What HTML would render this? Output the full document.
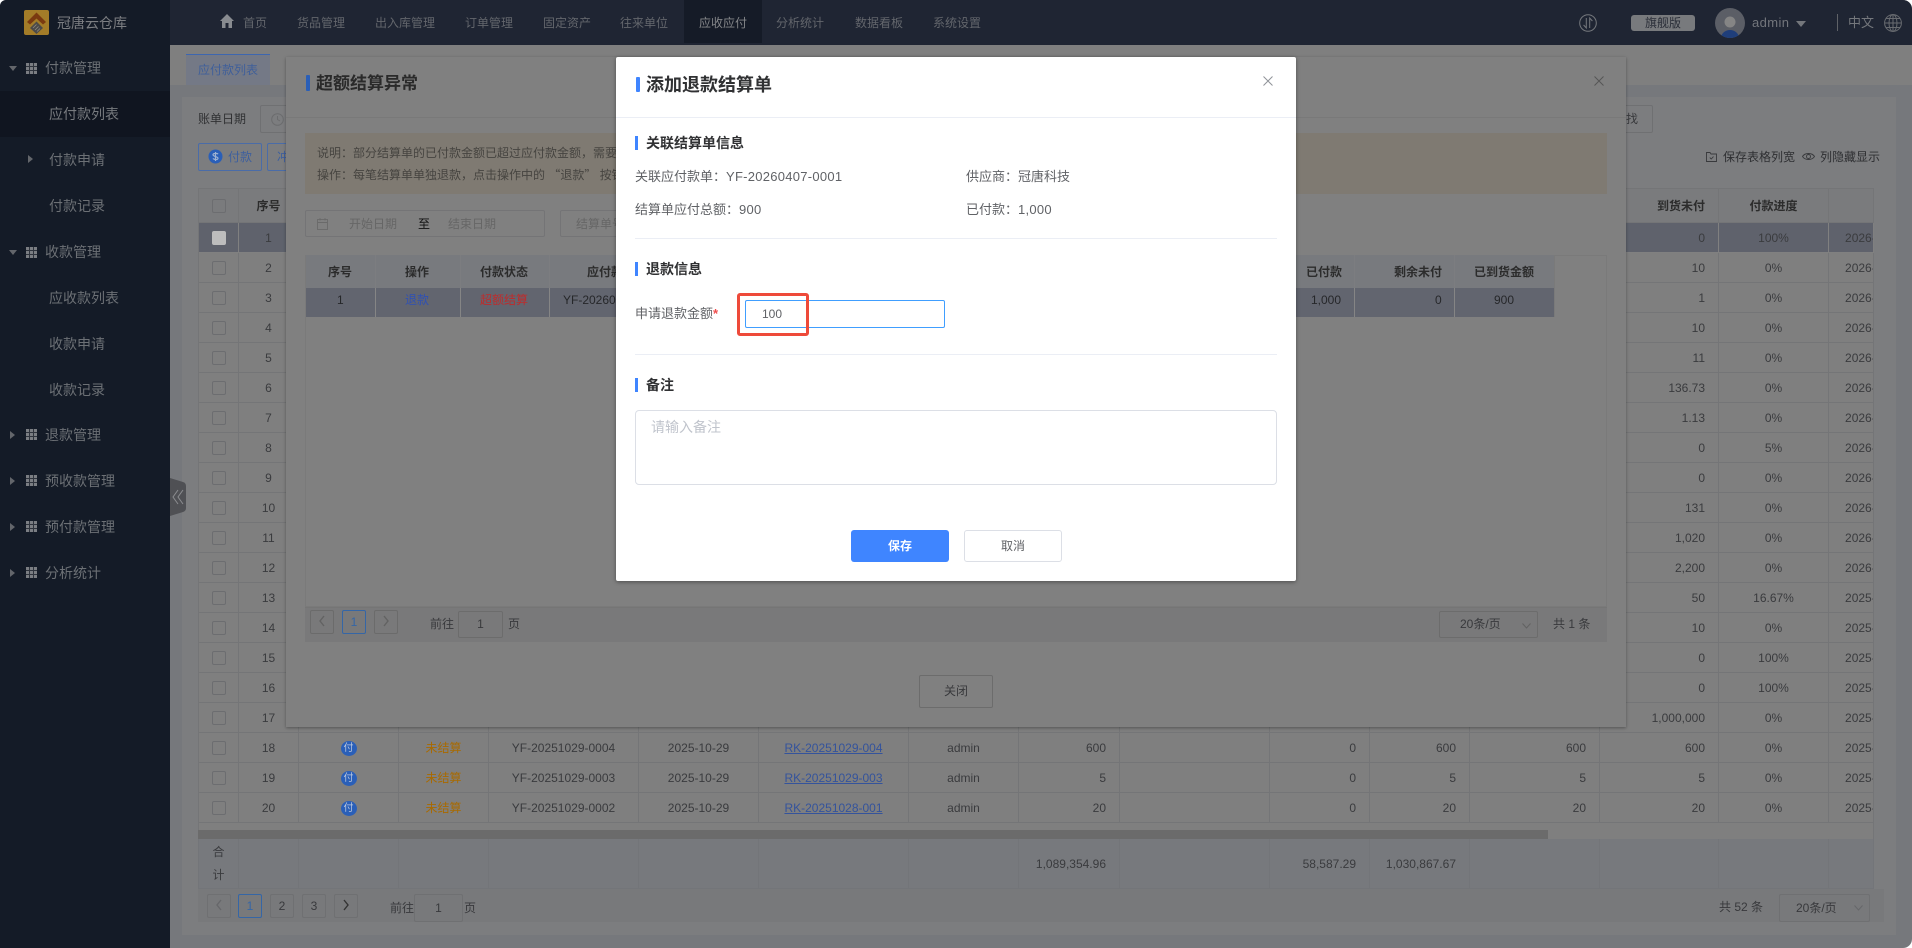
<!DOCTYPE html>
<html lang="zh-CN">
<head>
<meta charset="utf-8">
<title>冠唐云仓库</title>
<style>
*{box-sizing:border-box}
html,body{margin:0;padding:0;background:#fff;width:1912px;height:948px;overflow:hidden}
body{font:12px/20px "Liberation Sans","Noto Sans CJK SC",sans-serif;color:#38393c}
#root{position:absolute;left:0;top:0;width:1912px;height:948px;overflow:hidden;border-radius:6px 9px 9px 0;background:#76787c}
.a{position:absolute;white-space:nowrap}
.b{border:1px solid #6f7072;border-radius:2px}
.side{color:#6c7075;font-size:14px}
.nav{color:#63666c;font-size:12px;top:13px}
.tri-d{position:absolute;width:0;height:0;border-left:4px solid transparent;border-right:4px solid transparent;border-top:5px solid #63666b}
.tri-r{position:absolute;width:0;height:0;border-top:4px solid transparent;border-bottom:4px solid transparent;border-left:5px solid #63666b}
.g{position:absolute;width:11px;height:11px;background:repeating-linear-gradient(90deg,transparent 0 3px,#2f343d 3px 4px),repeating-linear-gradient(0deg,transparent 0 3px,#2f343d 3px 4px),#7b7e83}
table{border-collapse:separate;border-spacing:0;table-layout:fixed;position:absolute}
td,th{padding:0 13px;border-right:1px solid #747577;border-bottom:1px solid #747577;overflow:hidden;white-space:nowrap;font-size:12px;font-weight:400;height:30px;line-height:20px;text-align:center;color:#3a3b3e;background:#7f7f7f}
#ot{left:198px;top:188px;width:1675px;border-left:1px solid #747577;border-top:1px solid #747577}
#ot th{height:34px;background:#7a7b7d;font-weight:700;color:#2c2c2c}
#ot td.r,#ot th.r{text-align:right}
#ot td.d{text-align:left;padding:0 0 0 16px}
#ot td.p0,#ot th.p0{padding:0}
tr.s td{background:#5f626c;border-color:#808080}
.cb{display:inline-block;width:14px;height:14px;border:1px solid #6c6d70;border-radius:2px;vertical-align:middle}
tr.s .cb{background:#bdbdbd;border-color:#bdbdbd}
.pay{display:inline-block;width:16px;height:15px;line-height:15px;border-radius:50%;background:#2a5fb8;color:#b9c6dd;font-size:10px;vertical-align:middle}
.or{color:#a86a00}
.ln{color:#34539c;text-decoration:underline}
#sum{left:198px;top:839px;width:1675px;background:#77797d;border-left:1px solid #737579}
#sum td{height:50px;border-color:#737579;background:#77797d;text-align:right;color:#3a3b3e}
.pg{position:absolute;width:24px;height:24px;border:1px solid #6f7072;border-radius:2px;text-align:center;line-height:23px;background:transparent}
.on{color:#3566a6;border-color:#3566a6}
.sect{position:absolute;left:635px;width:3px;height:14px;background:#3f85ff}
.st{position:absolute;left:646px;font-size:14px;font-weight:700;color:#303133;line-height:20px;white-space:nowrap}
.dt{position:absolute;font-size:13px;color:#606266;line-height:20px;white-space:nowrap}
.dt b{font-weight:400;letter-spacing:.27px}
.hr{position:absolute;left:635px;width:642px;height:1px;background:#ebeef5}
.q{font-family:"Noto Sans CJK SC",sans-serif}
</style>
</head>
<body>
<div id="root">

<!-- sidebar -->
<div class="a" style="left:0;top:0;width:170px;height:948px;background:#141b27"></div>
<div class="a" style="left:0;top:91px;width:170px;height:46px;background:#101520"></div>
<svg class="a" style="left:24px;top:10px" width="25" height="25" viewBox="0 0 25 25">
<rect width="25" height="25" rx="2" fill="#a37c28"/>
<path d="M12.5 2.5L22 12l-3 2.5-6.5-6-6.5 6L3 12z" fill="#7a3a10"/>
<path d="M12.5 11.5l6.5 6.5-6.5 6L6 18z" fill="#4c4a48"/>
<path d="M9 18l3.5-3.5M11 20l3.5-3.5M13 21.5l3-3" stroke="#8f8a80" stroke-width=".8"/>
</svg>
<div class="a" style="left:57px;top:13px;font-size:14px;color:#7c7e82">冠唐云仓库</div>

<div class="tri-d" style="left:9px;top:66px"></div><div class="g" style="left:26px;top:63px"></div>
<div class="a side" style="left:45px;top:58px">付款管理</div>
<div class="a side" style="left:49px;top:104px;color:#777a7e">应付款列表</div>
<div class="tri-r" style="left:28px;top:155px"></div>
<div class="a side" style="left:49px;top:150px">付款申请</div>
<div class="a side" style="left:49px;top:196px">付款记录</div>
<div class="tri-d" style="left:9px;top:250px"></div><div class="g" style="left:26px;top:247px"></div>
<div class="a side" style="left:45px;top:242px">收款管理</div>
<div class="a side" style="left:49px;top:288px">应收款列表</div>
<div class="a side" style="left:49px;top:334px">收款申请</div>
<div class="a side" style="left:49px;top:380px">收款记录</div>
<div class="tri-r" style="left:10px;top:431px"></div><div class="g" style="left:26px;top:429px"></div>
<div class="a side" style="left:45px;top:425px">退款管理</div>
<div class="tri-r" style="left:10px;top:477px"></div><div class="g" style="left:26px;top:475px"></div>
<div class="a side" style="left:45px;top:471px">预收款管理</div>
<div class="tri-r" style="left:10px;top:523px"></div><div class="g" style="left:26px;top:521px"></div>
<div class="a side" style="left:45px;top:517px">预付款管理</div>
<div class="tri-r" style="left:10px;top:569px"></div><div class="g" style="left:26px;top:567px"></div>
<div class="a side" style="left:45px;top:563px">分析统计</div>

<!-- header -->
<div class="a" style="left:170px;top:0;width:1742px;height:45px;background:#1f2533"></div>
<div class="a" style="left:684px;top:0;width:78px;height:43px;background:#151b27"></div>
<svg class="a" style="left:220px;top:14px" width="14" height="14" viewBox="0 0 14 14"><path d="M7 0L0 7h2v7h3.5V9h3v5H12V7h2z" fill="#888b90"/></svg>
<div class="a nav" style="left:243px">首页</div>
<div class="a nav" style="left:297px">货品管理</div>
<div class="a nav" style="left:375px">出入库管理</div>
<div class="a nav" style="left:465px">订单管理</div>
<div class="a nav" style="left:543px">固定资产</div>
<div class="a nav" style="left:620px">往来单位</div>
<div class="a nav" style="left:699px;color:#85878a">应收应付</div>
<div class="a nav" style="left:776px">分析统计</div>
<div class="a nav" style="left:855px">数据看板</div>
<div class="a nav" style="left:933px">系统设置</div>

<svg class="a" style="left:1579px;top:14px" width="18" height="18" viewBox="0 0 18 18" fill="none" stroke="#75787d" stroke-width="1"><circle cx="9" cy="9" r="8.3"/><path d="M7.3 4v10L4.6 11M10.7 14V4l2.7 3"/></svg>
<div class="a" style="left:1631px;top:15px;width:64px;height:16px;border-radius:3px;background:#787a7d;color:#2a2e38;text-align:center;line-height:16px">旗舰版</div>
<svg class="a" style="left:1715px;top:8px" width="30" height="30" viewBox="0 0 30 30"><defs><clipPath id="av"><circle cx="15" cy="15" r="15"/></clipPath></defs><g clip-path="url(#av)"><rect width="30" height="30" fill="#5b5e66"/><circle cx="15" cy="14" r="5.5" fill="#858585"/><ellipse cx="15" cy="30" rx="9" ry="8" fill="#1f3e7a"/></g></svg>
<div class="a" style="left:1752px;top:13px;font-size:13px;color:#73767c;letter-spacing:.4px">admin</div>
<div class="a" style="left:1796px;top:21px;width:0;height:0;border-left:5px solid transparent;border-right:5px solid transparent;border-top:6px solid #74777c"></div>
<div class="a" style="left:1837px;top:14px;width:1px;height:17px;background:#5f6267"></div>
<div class="a" style="left:1848px;top:13px;font-size:13px;color:#74777c">中文</div>
<svg class="a" style="left:1884px;top:14px" width="18" height="18" viewBox="0 0 18 18" fill="none" stroke="#686b70" stroke-width="1"><circle cx="9" cy="9" r="8.4"/><ellipse cx="9" cy="9" rx="4" ry="8.4"/><path d="M9 .6v16.8M.6 9h16.8M2 4.5h14M2 13.5h14"/></svg>

<!-- tab row -->
<div class="a" style="left:170px;top:45px;width:1742px;height:40px;background:#7f7f7f"></div>
<div class="a" style="left:186px;top:54px;width:84px;height:31px;background:#747986;border-top:1px solid #3d66b0;color:#3f5f9a;text-align:center;line-height:31px">应付款列表</div>

<!-- card -->
<div class="a" style="left:182px;top:97px;width:1714px;height:838px;background:#7c7d7f"></div>
<div class="a" style="left:198px;top:109px;font-size:12px;color:#303133">账单日期</div>
<div class="a b" style="left:260px;top:105px;width:240px;height:28px"></div>
<svg class="a" style="left:271px;top:113px" width="13" height="13" viewBox="0 0 13 13" fill="none" stroke="#6b6c6e"><circle cx="6.5" cy="6.5" r="5.8"/><path d="M6.5 3v3.5l2.5 1.5"/></svg>
<div class="a b" style="left:1560px;top:105px;width:93px;height:28px;border-color:#6f7072"></div>
<div class="a" style="left:1626px;top:109px;color:#38393c">找</div>

<div class="a" style="left:198px;top:143px;width:64px;height:28px;border:1px solid #4a6ca8;border-radius:2px"></div>
<svg class="a" style="left:208px;top:149px" width="15" height="15" viewBox="0 0 15 15"><circle cx="7.5" cy="7.5" r="7" fill="#2a5fb8"/><path d="M10 5.2C9.4 4.2 5 3.9 5 5.8s5 1.6 5 3.5-4.3 1.2-5 .1M7.5 3v9" fill="none" stroke="#9eb2d2" stroke-width="1.2"/></svg>
<div class="a" style="left:228px;top:147px;color:#3d5f9e">付款</div>
<div class="a" style="left:267px;top:143px;width:64px;height:28px;border:1px solid #4a6ca8;border-radius:2px"></div>
<div class="a" style="left:277px;top:147px;color:#3d5f9e">冲</div>

<svg class="a" style="left:1706px;top:151px" width="11" height="11" viewBox="0 0 11 11" fill="none" stroke="#38393c" stroke-width=".9"><path d="M.5 1.5h3.5l1 1.5h5.5v7.5H.5z"/><path d="M3.8 6.6l1.4 1.4 2.3-2.4"/></svg>
<div class="a" style="left:1723px;top:147px;color:#2e2f32">保存表格列宽</div>
<svg class="a" style="left:1802px;top:151px" width="13" height="11" viewBox="0 0 13 11" fill="none" stroke="#38393c" stroke-width=".9"><path d="M.5 5.5C3 1.5 10 1.5 12.5 5.5 10 9.5 3 9.5.5 5.5z"/><circle cx="6.5" cy="5.5" r="2"/></svg>
<div class="a" style="left:1820px;top:147px;color:#2e2f32">列隐藏显示</div>

<!-- outer table -->
<table id="ot">
<colgroup><col style="width:40px"><col style="width:60px"><col style="width:100px"><col style="width:90px"><col style="width:150px"><col style="width:120px"><col style="width:150px"><col style="width:110px"><col style="width:101px"><col style="width:150px"><col style="width:100px"><col style="width:100px"><col style="width:130px"><col style="width:119px"><col style="width:110px"><col style="width:45px"></colgroup>
<tr><th class="p0"><i class="cb"></i></th><th class="p0">序号</th><th colspan="11"></th><th class="r">到货未付</th><th class="p0">付款进度</th><th class="p0"></th></tr>
<tr class="s"><td class="p0"><i class="cb"></i></td><td class="p0">1</td><td colspan="11"></td><td class="r">0</td><td class="p0">100%</td><td class="d">2026-04-07</td></tr>
<tr><td class="p0"><i class="cb"></i></td><td class="p0">2</td><td colspan="11"></td><td class="r">10</td><td class="p0">0%</td><td class="d">2026-04-07</td></tr>
<tr><td class="p0"><i class="cb"></i></td><td class="p0">3</td><td colspan="11"></td><td class="r">1</td><td class="p0">0%</td><td class="d">2026-04-07</td></tr>
<tr><td class="p0"><i class="cb"></i></td><td class="p0">4</td><td colspan="11"></td><td class="r">10</td><td class="p0">0%</td><td class="d">2026-04-07</td></tr>
<tr><td class="p0"><i class="cb"></i></td><td class="p0">5</td><td colspan="11"></td><td class="r">11</td><td class="p0">0%</td><td class="d">2026-04-07</td></tr>
<tr><td class="p0"><i class="cb"></i></td><td class="p0">6</td><td colspan="11"></td><td class="r">136.73</td><td class="p0">0%</td><td class="d">2026-04-07</td></tr>
<tr><td class="p0"><i class="cb"></i></td><td class="p0">7</td><td colspan="11"></td><td class="r">1.13</td><td class="p0">0%</td><td class="d">2026-04-07</td></tr>
<tr><td class="p0"><i class="cb"></i></td><td class="p0">8</td><td colspan="11"></td><td class="r">0</td><td class="p0">5%</td><td class="d">2026-04-07</td></tr>
<tr><td class="p0"><i class="cb"></i></td><td class="p0">9</td><td colspan="11"></td><td class="r">0</td><td class="p0">0%</td><td class="d">2026-04-07</td></tr>
<tr><td class="p0"><i class="cb"></i></td><td class="p0">10</td><td colspan="11"></td><td class="r">131</td><td class="p0">0%</td><td class="d">2026-04-07</td></tr>
<tr><td class="p0"><i class="cb"></i></td><td class="p0">11</td><td colspan="11"></td><td class="r">1,020</td><td class="p0">0%</td><td class="d">2026-04-07</td></tr>
<tr><td class="p0"><i class="cb"></i></td><td class="p0">12</td><td colspan="11"></td><td class="r">2,200</td><td class="p0">0%</td><td class="d">2026-04-07</td></tr>
<tr><td class="p0"><i class="cb"></i></td><td class="p0">13</td><td colspan="11"></td><td class="r">50</td><td class="p0">16.67%</td><td class="d">2025-10-29</td></tr>
<tr><td class="p0"><i class="cb"></i></td><td class="p0">14</td><td colspan="11"></td><td class="r">10</td><td class="p0">0%</td><td class="d">2025-10-29</td></tr>
<tr><td class="p0"><i class="cb"></i></td><td class="p0">15</td><td colspan="11"></td><td class="r">0</td><td class="p0">100%</td><td class="d">2025-10-29</td></tr>
<tr><td class="p0"><i class="cb"></i></td><td class="p0">16</td><td colspan="11"></td><td class="r">0</td><td class="p0">100%</td><td class="d">2025-10-29</td></tr>
<tr><td class="p0"><i class="cb"></i></td><td class="p0">17</td><td></td><td></td><td></td><td></td><td></td><td></td><td></td><td></td><td></td><td></td><td></td><td class="r">1,000,000</td><td class="p0">0%</td><td class="d">2025-10-29</td></tr>
<tr><td class="p0"><i class="cb"></i></td><td class="p0">18</td><td class="p0"><span class="pay">付</span></td><td class="p0 or">未结算</td><td class="p0">YF-20251029-0004</td><td class="p0">2025-10-29</td><td class="p0"><span class="ln">RK-20251029-004</span></td><td class="p0">admin</td><td class="r">600</td><td></td><td class="r">0</td><td class="r">600</td><td class="r">600</td><td class="r">600</td><td class="p0">0%</td><td class="d">2025-10-29</td></tr>
<tr><td class="p0"><i class="cb"></i></td><td class="p0">19</td><td class="p0"><span class="pay">付</span></td><td class="p0 or">未结算</td><td class="p0">YF-20251029-0003</td><td class="p0">2025-10-29</td><td class="p0"><span class="ln">RK-20251029-003</span></td><td class="p0">admin</td><td class="r">5</td><td></td><td class="r">0</td><td class="r">5</td><td class="r">5</td><td class="r">5</td><td class="p0">0%</td><td class="d">2025-10-29</td></tr>
<tr><td class="p0"><i class="cb"></i></td><td class="p0">20</td><td class="p0"><span class="pay">付</span></td><td class="p0 or">未结算</td><td class="p0">YF-20251029-0002</td><td class="p0">2025-10-29</td><td class="p0"><span class="ln">RK-20251028-001</span></td><td class="p0">admin</td><td class="r">20</td><td></td><td class="r">0</td><td class="r">20</td><td class="r">20</td><td class="r">20</td><td class="p0">0%</td><td class="d">2025-10-29</td></tr>
</table>

<!-- scrollbar band -->
<div class="a" style="left:198px;top:823px;width:1676px;height:16px;background:#7f7f7f;border-left:1px solid #747577;border-right:1px solid #747577"></div>
<div class="a" style="left:198px;top:830px;width:1350px;height:10px;background:#6b6b6b"></div>

<!-- summary -->
<table id="sum">
<colgroup><col style="width:40px"><col style="width:60px"><col style="width:100px"><col style="width:90px"><col style="width:150px"><col style="width:120px"><col style="width:150px"><col style="width:110px"><col style="width:101px"><col style="width:150px"><col style="width:100px"><col style="width:100px"><col style="width:130px"><col style="width:119px"><col style="width:110px"><col style="width:45px"></colgroup>
<tr><td style="padding:0;text-align:center;line-height:23px;white-space:normal">合<br>计</td><td></td><td></td><td></td><td></td><td></td><td></td><td></td><td>1,089,354.96</td><td></td><td>58,587.29</td><td>1,030,867.67</td><td></td><td></td><td></td><td></td></tr>
</table>

<!-- bottom pagination -->
<div class="a" style="left:198px;top:889px;width:1686px;height:33px;background:#78797b"></div>
<div class="pg" style="left:207px;top:894px"><svg width="8" height="12" viewBox="0 0 8 12" fill="none" stroke="#66676a" stroke-width="1.4" style="margin-top:4px"><path d="M6 1L2 6l4 5"/></svg></div>
<div class="pg on" style="left:238px;top:894px">1</div>
<div class="pg" style="left:270px;top:894px">2</div>
<div class="pg" style="left:302px;top:894px">3</div>
<div class="pg" style="left:334px;top:894px"><svg width="8" height="12" viewBox="0 0 8 12" fill="none" stroke="#333" stroke-width="1.4" style="margin-top:4px"><path d="M2 1l4 5-4 5"/></svg></div>
<div class="a" style="left:390px;top:898px">前往</div>
<div class="a b" style="left:414px;top:894px;width:49px;height:28px;text-align:center;line-height:26px">1</div>
<div class="a" style="left:464px;top:898px">页</div>
<div class="a" style="left:1719px;top:897px">共 52 条</div>
<div class="a b" style="left:1779px;top:894px;width:91px;height:28px"></div>
<div class="a" style="left:1796px;top:898px">20条/页</div>
<svg class="a" style="left:1854px;top:905px" width="9" height="6" viewBox="0 0 9 6" fill="none" stroke="#66676a"><path d="M.5 .5l4 4.5 4-4.5"/></svg>

<!-- collapse handle -->
<svg class="a" style="left:170px;top:478px" width="16" height="38" viewBox="0 0 16 38"><path d="M0 0l13 4q3 1 3 4v22q0 3-3 4L0 38z" fill="#4f5054"/><path d="M8 12l-5 7 5 7M13 12l-5 7 5 7" fill="none" stroke="#8c8d90" stroke-width="1"/></svg>

<!-- dialog 1 -->
<div class="a" style="left:286px;top:57px;width:1340px;height:670px;background:#808080;box-shadow:0 1px 3px rgba(0,0,0,.35)"></div>
<div class="a" style="left:286px;top:117px;width:1340px;height:1px;background:#797979"></div>
<div class="a" style="left:306px;top:75px;width:4px;height:16px;background:#2a5fb8;border-radius:1px"></div>
<div class="a" style="left:316px;top:72px;font-size:17px;font-weight:700;line-height:24px;color:#2a2a2a">超额结算异常</div>
<svg class="a" style="left:1594px;top:76px" width="10" height="10" viewBox="0 0 10 10" stroke="#555" fill="none"><path d="M.5 .5l9 9M9.5 .5l-9 9"/></svg>
<div class="a" style="left:305px;top:133px;width:1302px;height:61px;background:#7f7a72"></div>
<div class="a" style="left:317px;top:143px;color:#464440">说明：部分结算单的已付款金额已超过应付款金额，需要</div>
<div class="a" style="left:317px;top:165px;color:#464440">操作：每笔结算单单独退款，点击操作中的 <span class="q">“退款”</span> 按钮</div>

<div class="a b" style="left:305px;top:210px;width:240px;height:27px;border-color:#747476"></div>
<svg class="a" style="left:317px;top:218px" width="11" height="12" viewBox="0 0 11 12" fill="none" stroke="#6a6a6a" stroke-width=".9"><rect x=".5" y="1.5" width="10" height="10"/><path d="M.5 4.5h10M3 0v2.5M8 0v2.5"/></svg>
<div class="a" style="left:349px;top:214px;color:#666">开始日期</div>
<div class="a" style="left:418px;top:214px;color:#111">至</div>
<div class="a" style="left:448px;top:214px;color:#666">结束日期</div>
<div class="a b" style="left:560px;top:210px;width:120px;height:27px;border-color:#747476"></div>
<div class="a" style="left:576px;top:214px;color:#666">结算单号</div>

<div class="a" style="left:305px;top:255px;width:1302px;height:352px;border:1px solid #7a7a7a"></div>
<div class="a" style="left:306px;top:255px;width:1248px;height:33px;background:#787a7e"></div>
<div class="a" style="left:306px;top:288px;width:1248px;height:29px;background:#62656f"></div>
<div class="a" style="left:375px;top:288px;width:1px;height:29px;background:#858585"></div>
<div class="a" style="left:460px;top:288px;width:1px;height:29px;background:#858585"></div>
<div class="a" style="left:549px;top:288px;width:1px;height:29px;background:#858585"></div>
<div class="a" style="left:1354px;top:288px;width:1px;height:29px;background:#858585"></div>
<div class="a" style="left:1454px;top:288px;width:1px;height:29px;background:#858585"></div>
<div class="a" style="left:1554px;top:255px;width:1px;height:62px;background:#7a7a7a"></div>
<div class="a" style="left:1354px;top:255px;width:1px;height:33px;background:#7c7d80"></div>
<div class="a" style="left:1454px;top:255px;width:1px;height:33px;background:#7c7d80"></div>
<div class="a" style="left:375px;top:255px;width:1px;height:33px;background:#7c7d80"></div>
<div class="a" style="left:460px;top:255px;width:1px;height:33px;background:#7c7d80"></div>
<div class="a" style="left:549px;top:255px;width:1px;height:33px;background:#7c7d80"></div>
<div class="a" style="left:328px;top:262px;font-weight:700;color:#2c2c2c">序号</div>
<div class="a" style="left:405px;top:262px;font-weight:700;color:#2c2c2c">操作</div>
<div class="a" style="left:480px;top:262px;font-weight:700;color:#2c2c2c">付款状态</div>
<div class="a" style="left:587px;top:262px;font-weight:700;color:#2c2c2c">应付款单号</div>
<div class="a" style="left:1306px;top:262px;font-weight:700;color:#2c2c2c">已付款</div>
<div class="a" style="left:1394px;top:262px;font-weight:700;color:#2c2c2c">剩余未付</div>
<div class="a" style="left:1474px;top:262px;font-weight:700;color:#2c2c2c">已到货金额</div>
<div class="a" style="left:337px;top:290px;color:#26272a">1</div>
<div class="a" style="left:405px;top:290px;color:#2f50b4">退款</div>
<div class="a" style="left:480px;top:290px;color:#bd2c2c">超额结算</div>
<div class="a" style="left:563px;top:290px;color:#26272a">YF-20260407-0001</div>
<div class="a" style="left:1311px;top:290px;color:#26272a">1,000</div>
<div class="a" style="left:1435px;top:290px;color:#26272a">0</div>
<div class="a" style="left:1494px;top:290px;color:#26272a">900</div>

<div class="a" style="left:305px;top:607px;width:1302px;height:35px;background:#79797a;border-top:1px solid #757575"></div>
<div class="pg" style="left:310px;top:610px;border-color:#6b6b6b"><svg width="8" height="12" viewBox="0 0 8 12" fill="none" stroke="#626262" stroke-width="1.4" style="margin-top:4px"><path d="M6 1L2 6l4 5"/></svg></div>
<div class="pg on" style="left:342px;top:610px">1</div>
<div class="pg" style="left:374px;top:610px;border-color:#6b6b6b"><svg width="8" height="12" viewBox="0 0 8 12" fill="none" stroke="#626262" stroke-width="1.4" style="margin-top:4px"><path d="M2 1l4 5-4 5"/></svg></div>
<div class="a" style="left:430px;top:614px">前往</div>
<div class="a b" style="left:458px;top:611px;width:45px;height:27px;text-align:center;line-height:25px;border-color:#6c6c6c">1</div>
<div class="a" style="left:508px;top:614px">页</div>
<div class="a b" style="left:1439px;top:611px;width:99px;height:27px;border-color:#6c6c6c"></div>
<div class="a" style="left:1460px;top:614px">20条/页</div>
<svg class="a" style="left:1522px;top:623px" width="9" height="6" viewBox="0 0 9 6" fill="none" stroke="#626262"><path d="M.5 .5l4 4.5 4-4.5"/></svg>
<div class="a" style="left:1553px;top:614px">共 1 条</div>
<div class="a b" style="left:919px;top:675px;width:74px;height:33px;border-color:#6c6c6c;text-align:center;line-height:31px">关闭</div>

<!-- dialog 2 -->
<div class="a" style="left:616px;top:57px;width:680px;height:524px;background:#fff;border-radius:2px;box-shadow:0 1px 4px rgba(0,0,0,.4)"></div>
<div class="a" style="left:616px;top:117px;width:680px;height:1px;background:#ebeef5"></div>
<div class="a" style="left:636px;top:77px;width:4px;height:15px;background:#3f85ff;border-radius:1px"></div>
<div class="a" style="left:646px;top:73px;font-size:18px;font-weight:700;line-height:24px;color:#303133">添加退款结算单</div>
<svg class="a" style="left:1263px;top:76px" width="10" height="10" viewBox="0 0 10 10" stroke="#909399" fill="none"><path d="M.5 .5l9 9M9.5 .5l-9 9"/></svg>

<div class="sect" style="top:136px"></div><div class="st" style="top:133px">关联结算单信息</div>
<div class="dt" style="left:635px;top:167px">关联应付款单：<b>YF-20260407-0001</b></div>
<div class="dt" style="left:966px;top:167px">供应商：冠唐科技</div>
<div class="dt" style="left:635px;top:200px">结算单应付总额：<b>900</b></div>
<div class="dt" style="left:966px;top:200px">已付款：<b>1,000</b></div>
<div class="hr" style="top:238px"></div>

<div class="sect" style="top:262px"></div><div class="st" style="top:259px">退款信息</div>
<div class="dt" style="left:635px;top:304px">申请退款金额<span style="color:#f04c4c;font-weight:700">*</span></div>
<div class="a" style="left:745px;top:300px;width:200px;height:28px;border:1px solid #409eff;border-radius:2px;padding-left:16px;line-height:26px;font-size:12px;color:#606266">100</div>
<div class="a" style="left:737px;top:293px;width:72px;height:43px;border:3px solid #ee4a3a;border-radius:3px"></div>
<div class="hr" style="top:354px"></div>

<div class="sect" style="top:378px"></div><div class="st" style="top:375px">备注</div>
<div class="a" style="left:635px;top:410px;width:642px;height:75px;border:1px solid #dcdfe6;border-radius:4px"></div>
<div class="a" style="left:651px;top:417px;font-size:14px;color:#c0c4cc">请输入备注</div>
<div class="a" style="left:851px;top:530px;width:98px;height:32px;background:#3f85ff;border-radius:3px;color:#fff;font-weight:700;text-align:center;line-height:32px">保存</div>
<div class="a" style="left:964px;top:530px;width:98px;height:32px;background:#fff;border:1px solid #dcdfe6;border-radius:3px;color:#606266;text-align:center;line-height:30px">取消</div>

</div>
</body>
</html>
